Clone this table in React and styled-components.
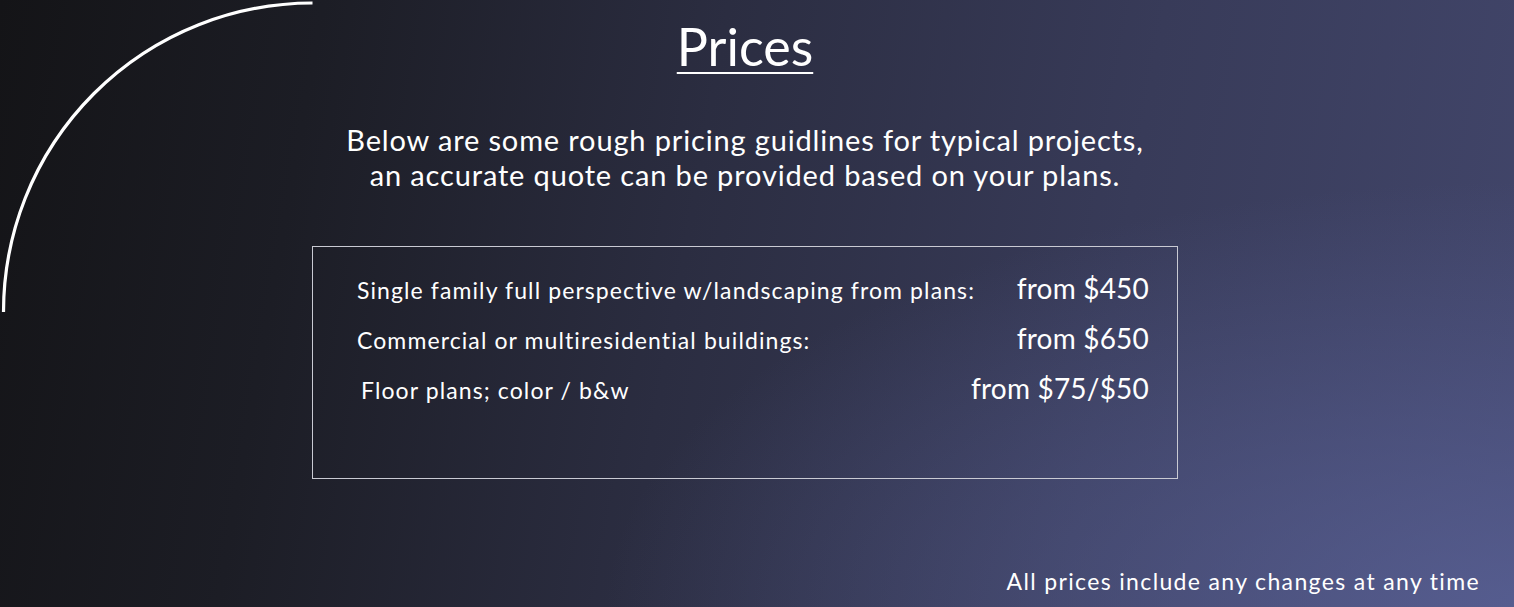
import React from 'react';
import styled, { createGlobalStyle } from 'styled-components';

const GlobalStyle = createGlobalStyle`
  html, body {
    margin: 0;
    padding: 0;
  }
  body {
    font-family: Lato, "Open Sans", sans-serif;
    color: #fff;
  }
`;

const Page = styled.div`
  position: relative;
  width: 1514px;
  height: 607px;
  overflow: hidden;
  box-sizing: border-box;
  padding: 14px 24px 0 0;
  display: flex;
  flex-direction: column;
  align-items: center;
  background:
    radial-gradient(ellipse 60% 70% at 100% 100%, rgba(92, 100, 155, 0.75) 0%, rgba(92, 100, 155, 0) 100%),
    linear-gradient(100deg, #141417 0%, #1c1d25 20%, #2b2d41 45%, #383b59 72%, #42466b 100%);
`;

const Arc = styled.svg`
  position: absolute;
  left: 0;
  top: 0;
`;

const Title = styled.h1`
  margin: 0;
  font-size: 52px;
  font-weight: 400;
  line-height: 64px;
  text-decoration: underline;
  text-decoration-thickness: 2px;
  text-underline-offset: 6px;
`;

const Intro = styled.p`
  margin: 44px 0 0;
  font-size: 29px;
  line-height: 35px;
  letter-spacing: 0.85px;
  text-align: center;
`;

const PriceBox = styled.div`
  margin-top: 54px;
  width: 866px;
  height: 233px;
  box-sizing: border-box;
  border: 1px solid #c9cad3;
  padding: 24px 28px 0 44px;
  display: flex;
  flex-direction: column;
`;

const Row = styled.div`
  display: grid;
  grid-template-columns: 1fr auto;
  align-items: baseline;
  height: ${p => p.$h}px;
`;

const Label = styled.span`
  font-size: 23px;
  letter-spacing: 1.1px;
  padding-left: ${p => p.$indent || 0}px;
`;

const Price = styled.span`
  font-size: 28px;
  letter-spacing: 0.2px;
`;

const Footer = styled.div`
  position: absolute;
  right: 34px;
  bottom: 12px;
  font-size: 23px;
  letter-spacing: 1.35px;
`;

const rows = [
  { label: 'Single family full perspective w/landscaping from plans:', price: 'from $450', h: 50 },
  { label: 'Commercial or multiresidential buildings:', price: 'from $650', h: 50 },
  { label: 'Floor plans; color / b&w', price: 'from $75/$50', h: 50, indent: 4 },
];

export default function App() {
  return (
    <>
      <GlobalStyle />
      <Page>
        <Arc width="320" height="320" viewBox="0 0 320 320">
          <path d="M 3.5 312 A 309 309 0 0 1 312.5 3" fill="none" stroke="#fff" strokeWidth="3.2" />
        </Arc>
        <Title>Prices</Title>
        <Intro>
          Below are some rough pricing guidlines for typical projects,
          <br />
          an accurate quote can be provided based on your plans.
        </Intro>
        <PriceBox>
          {rows.map(r => (
            <Row key={r.label} $h={r.h}>
              <Label $indent={r.indent}>{r.label}</Label>
              <Price>{r.price}</Price>
            </Row>
          ))}
        </PriceBox>
        <Footer>All prices include any changes at any time</Footer>
      </Page>
    </>
  );
}
